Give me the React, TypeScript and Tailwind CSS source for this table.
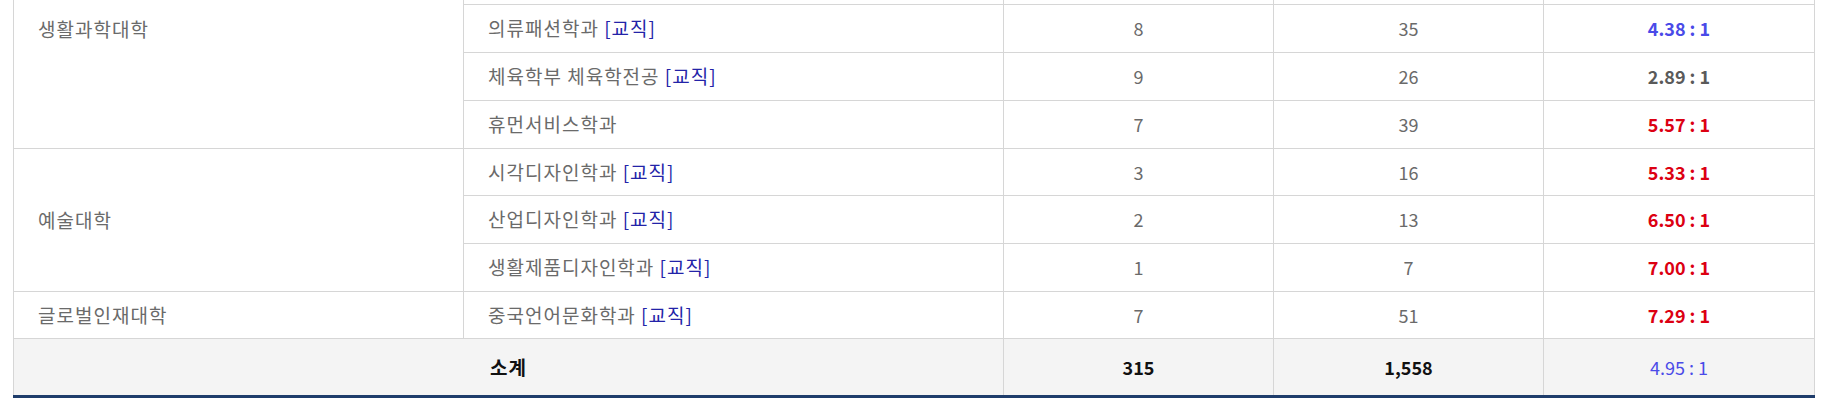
import React from "react";

type Row = {
  college?: { name: string; span: number; top?: boolean };
  dept: string;
  tag?: boolean;
  quota: string;
  applicants: string;
  ratio: string;
  tone: "blue" | "gray" | "red";
  h: string;
};

const rows: Row[] = [
  { college: { name: "생활과학대학", span: 4, top: true }, dept: "의류패션학과", tag: true, quota: "8", applicants: "35", ratio: "4.38 : 1", tone: "blue", h: "h-[48px]" },
  { dept: "체육학부 체육학전공", tag: true, quota: "9", applicants: "26", ratio: "2.89 : 1", tone: "gray", h: "h-[48px]" },
  { dept: "휴먼서비스학과", quota: "7", applicants: "39", ratio: "5.57 : 1", tone: "red", h: "h-[48px]" },
  { college: { name: "예술대학", span: 3 }, dept: "시각디자인학과", tag: true, quota: "3", applicants: "16", ratio: "5.33 : 1", tone: "red", h: "h-[47px]" },
  { dept: "산업디자인학과", tag: true, quota: "2", applicants: "13", ratio: "6.50 : 1", tone: "red", h: "h-[48px]" },
  { dept: "생활제품디자인학과", tag: true, quota: "1", applicants: "7", ratio: "7.00 : 1", tone: "red", h: "h-[48px]" },
  { college: { name: "글로벌인재대학", span: 1 }, dept: "중국언어문화학과", tag: true, quota: "7", applicants: "51", ratio: "7.29 : 1", tone: "red", h: "h-[47px]" },
];

const toneClass = {
  blue: "text-[#4a4ae8]",
  gray: "text-[#5a5a5a]",
  red: "text-[#dc0012]",
};

const cell = "border border-[#d6d6d6] p-0";

export default function App() {
  return (
    <div
      className="w-[1829px] h-[409px] bg-white overflow-hidden"
      style={{ fontFamily: '"Noto Sans CJK KR", "Noto Sans", sans-serif' }}
    >
      <table className="ml-[13px] w-[1801px] border-collapse table-fixed text-[18px] leading-[22px] text-[#6a6a6a]">
        <colgroup>
          <col className="w-[450px]" />
          <col className="w-[540px]" />
          <col className="w-[270px]" />
          <col className="w-[270px]" />
          <col className="w-[271px]" />
        </colgroup>
        <tbody>
          <tr className="h-[4px]">
            <td rowSpan={4} className={`${cell} border-t-0 align-top pl-[24px] pt-[18px] text-[19px] tracking-[1px]`}>
              생활과학대학
            </td>
            <td className={`${cell} border-t-0`} />
            <td className={`${cell} border-t-0`} />
            <td className={`${cell} border-t-0`} />
            <td className={`${cell} border-t-0`} />
          </tr>
          {rows.map((r, i) => (
            <tr key={i} className={r.h}>
              {r.college && !r.college.top && (
                <td rowSpan={r.college.span} className={`${cell} pl-[24px] align-middle text-[19px] tracking-[1px]`}>
                  {r.college.name}
                </td>
              )}
              <td className={`${cell} pl-[24px] align-middle text-[19px] tracking-[1px]`}>
                {r.dept}
                {r.tag && <span className="text-[#2323a8]"> [교직]</span>}
              </td>
              <td className={`${cell} text-center align-middle`}>{r.quota}</td>
              <td className={`${cell} text-center align-middle`}>{r.applicants}</td>
              <td className={`${cell} text-center align-middle font-bold ${toneClass[r.tone]}`}>{r.ratio}</td>
            </tr>
          ))}
          <tr className="h-[58px] bg-[#f4f4f4]">
            <td colSpan={2} className={`${cell} border-b-[3px] border-b-[#1f3d6b] text-center align-middle font-bold text-[#111111] text-[19px] tracking-[1px]`}>
              소계
            </td>
            <td className={`${cell} border-b-[3px] border-b-[#1f3d6b] text-center align-middle font-bold text-[#111111]`}>315</td>
            <td className={`${cell} border-b-[3px] border-b-[#1f3d6b] text-center align-middle font-bold text-[#111111]`}>1,558</td>
            <td className={`${cell} border-b-[3px] border-b-[#1f3d6b] text-center align-middle text-[#4a4ae8]`}>4.95 : 1</td>
          </tr>
        </tbody>
      </table>
    </div>
  );
}
